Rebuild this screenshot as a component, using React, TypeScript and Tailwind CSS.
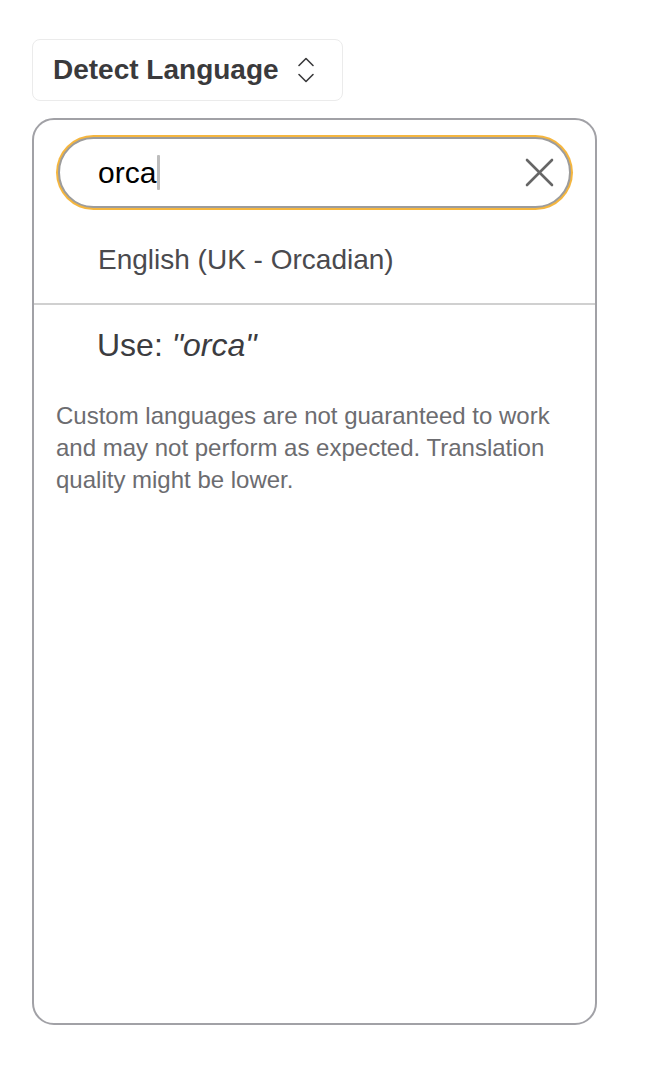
export default function App() {
  return (
    <div
      className="min-h-screen bg-white pl-[32px] pt-[39px]"
      style={{ fontFamily: '"Liberation Sans", Arial, Helvetica, sans-serif' }}
    >
      <div className="flex h-[62px] w-[311px] items-center rounded-[8px] border border-[#ebebeb] pl-[20px]">
        <span className="text-[28px] font-bold leading-none text-[#3a3a3c]">Detect Language</span>
        <svg className="ml-[18px]" width="18" height="28" viewBox="0 0 18 28" fill="none" stroke="#3a3a3c" strokeWidth="1.6" strokeLinecap="round" strokeLinejoin="round">
          <path d="M2 9.5 L9 2.5 L16 9.5" />
          <path d="M2 18.5 L9 25.5 L16 18.5" />
        </svg>
      </div>

      <div className="mt-[17px] h-[907px] w-[565px] rounded-[22px] border-2 border-[#a1a1a6]">
        <div className="px-[22px] pt-[15px]">
          <div className="rounded-full bg-[#f5b63f] p-[2px]">
            <div className="flex h-[71px] items-center rounded-full border-2 border-[#9c9c9c] bg-white pl-[38px] pr-[15px]">
              <span className="text-[30px] leading-none text-black">orca</span>
              <span className="ml-[1px] h-[35px] w-[3px] rounded-[1px] bg-[#bdbdbd]" />
              <div className="flex-1" />
              <svg width="29" height="29" viewBox="0 0 29 29" fill="none" stroke="#666666" strokeWidth="2.6" strokeLinecap="round">
                <path d="M2 2 L27 27" />
                <path d="M27 2 L2 27" />
              </svg>
            </div>
          </div>
        </div>

        <div className="pb-[27px] pl-[64px] pt-[34px] text-[28px] leading-[32px] text-[#4a4a4e]">
          English (UK - Orcadian)
        </div>
        <div className="h-[2px] bg-[#d0d0d0]" />

        <div className="pl-[63px] pt-[24px] text-[32px] leading-[32px] text-[#3c3c40]">
          Use: <span className="italic">"orca"</span>
        </div>

        <div className="pl-[22px] pr-[16px] pt-[39px] text-[24px] leading-[32px] text-[#6c6c70]">
          Custom languages are not guaranteed to work and may not perform as expected. Translation quality might be lower.
        </div>
      </div>
    </div>
  );
}
